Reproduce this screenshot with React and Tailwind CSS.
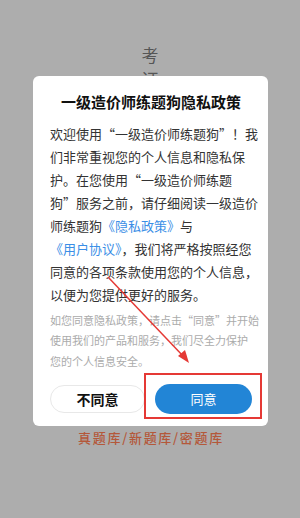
import React from 'react';

const bodyLines = [
  ['欢迎使用“一级造价师练题狗”！我'],
  ['们非常重视您的个人信息和隐私保'],
  ['护。在您使用“一级造价师练题'],
  ['狗”服务之前，请仔细阅读一级造价'],
  ['师练题狗', { link: '《隐私政策》' }, '与'],
  [{ link: '《用户协议》' }, '，我们将严格按照经您'],
  ['同意的各项条款使用您的个人信息，'],
  ['以便为您提供更好的服务。'],
];

const tipLines = [
  '如您同意隐私政策，请点击“同意”并开始',
  '使用我们的产品和服务，我们尽全力保护',
  '您的个人信息安全。',
];

function App() {
  return (
    <div
      className="relative h-[518px] w-full overflow-hidden bg-[#adadad]"
      style={{ fontFamily: '"Noto Sans CJK SC", "Noto Sans", sans-serif' }}
    >
      {/* page behind the mask */}
      <div className="flex flex-col items-center pt-[43px]">
        <div className="text-[17px] leading-[24px] text-[#555]">考</div>
        <div className="text-[17px] leading-[24px] text-[#555]">证</div>
        <div className="mt-[339px] pl-[2px] text-[13px] font-medium leading-[16px] tracking-[1.7px] text-[#b4583a]">
          真题库/新题库/密题库
        </div>
      </div>

      {/* privacy dialog */}
      <div className="absolute left-[33px] top-[76px] w-[235px] rounded-[6px] bg-white pb-[12px] pl-[17px] pr-[16px] pt-[16px]">
        <div className="text-center text-[15px] font-bold leading-[20px] text-[#111]">
          一级造价师练题狗隐私政策
        </div>

        <div className="mt-[9.5px] text-[13px] leading-[23px] text-[#333]">
          {bodyLines.map((parts, i) => (
            <div key={i} className="whitespace-nowrap">
              {parts.map((p, j) =>
                typeof p === 'string' ? (
                  <span key={j}>{p}</span>
                ) : (
                  <span key={j} className="text-[#3a8ee6]">{p.link}</span>
                )
              )}
            </div>
          ))}
        </div>

        <div className="mt-[4px] text-[11px] leading-[20.5px] text-[#ababab]">
          {tipLines.map((t, i) => (
            <div key={i} className="whitespace-nowrap">{t}</div>
          ))}
        </div>

        <div className="mt-[13px] flex items-center gap-[10px]">
          <button className="flex h-[28px] w-[95px] items-center justify-center rounded-full border border-[#e8e8e8] bg-white text-[14px] font-bold text-[#111]">
            不同意
          </button>
          <button className="flex h-[30px] w-[97px] items-center justify-center rounded-full bg-[#2285d6] text-[13px] text-white">
            同意
          </button>
        </div>
      </div>

      {/* red annotation */}
      <div className="absolute left-[144px] top-[373px] h-[46px] w-[118px] border-2 border-[#e53935]" />
      <svg className="absolute left-0 top-0" width="300" height="518" viewBox="0 0 300 518">
        <line x1="108" y1="277" x2="184" y2="357" stroke="#e53935" strokeWidth="1.5" />
        <polygon points="189,363 178,356 185,350" fill="#e53935" />
      </svg>
    </div>
  );
}

export default App;
